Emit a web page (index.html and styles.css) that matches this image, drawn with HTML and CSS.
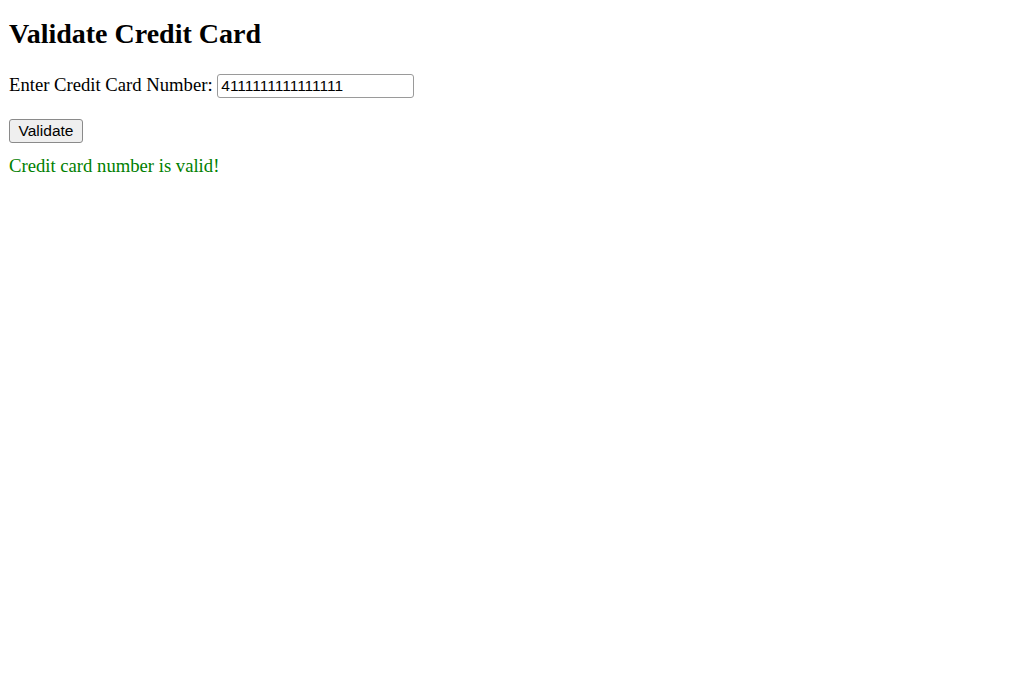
FILE: index.html
```html
<!DOCTYPE html>
<html>
<head>
<meta charset="utf-8">
<title>Validate Credit Card</title>
<link rel="stylesheet" href="styles.css">
</head>
<body>
<h1 class="title">Validate Credit Card</h1>
<div class="row row-input">
<label for="cc">Enter Credit Card Number:</label>
<input type="text" id="cc" class="cc-input" value="4111111111111111">
</div>
<div class="row row-button">
<button class="btn">Validate</button>
</div>
<div class="result">Credit card number is valid!</div>
</body>
</html>
```
FILE: styles.css
```css
html, body {
  background: #fff;
}
body {
  margin: 0;
  padding: 0 9px;
  font-family: "Liberation Serif", "Times New Roman", serif;
  font-size: 18.67px;
  color: #000;
}
.title {
  font-size: 28px;
  font-weight: bold;
  line-height: 31px;
  margin: 0;
  padding-top: 18px;
}
.row {
  margin: 0;
}
.row-input {
  margin-top: 25px;
}
.row-button {
  margin-top: 21px;
}
.cc-input {
  font-family: "Liberation Sans", Arial, sans-serif;
  font-size: 15.5px;
  color: #000;
  width: 197px;
  height: 24px;
  box-sizing: border-box;
  padding: 1px 3px;
  margin: 0;
  border: 1px solid #9a9a9a;
  border-radius: 3px;
  background: #fff;
  vertical-align: baseline;
}
.btn {
  font-family: "Liberation Sans", Arial, sans-serif;
  font-size: 15.5px;
  color: #000;
  width: 74px;
  height: 24px;
  box-sizing: border-box;
  padding: 1px 6px;
  margin: 0;
  border: 1px solid #8a8a8a;
  border-radius: 3px;
  background: #efefef;
}
.result {
  color: #008000;
  margin-top: 12px;
}
```
